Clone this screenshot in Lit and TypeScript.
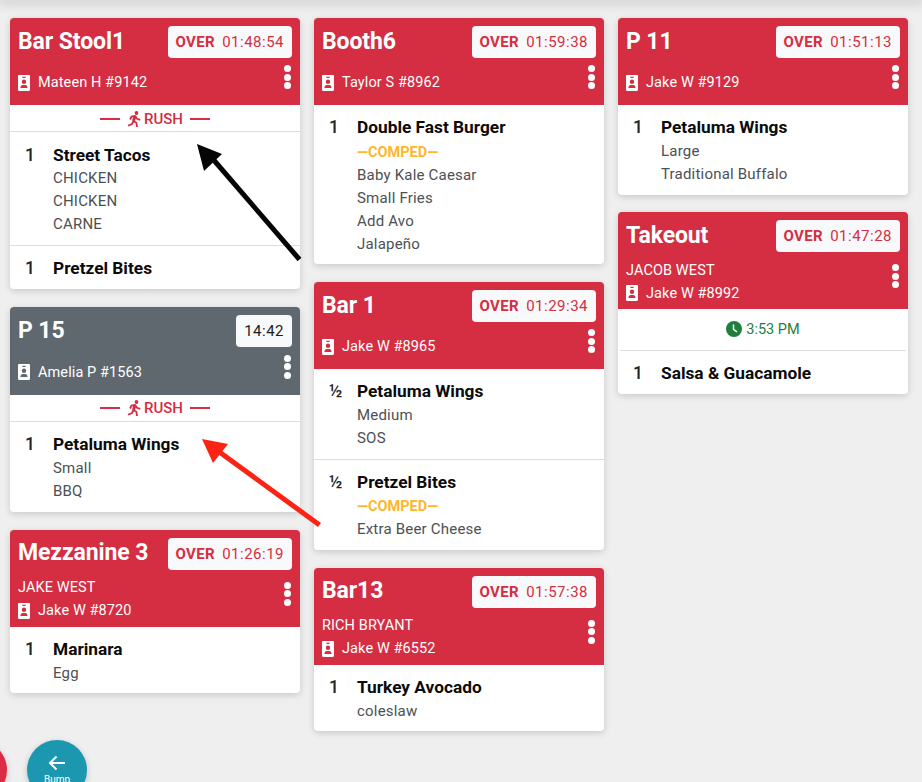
import { LitElement, css, html, nothing, svg } from "lit";
import { customElement, property } from "lit/decorators.js";

type Item = { qty: string; name: string; mods?: string[]; comped?: boolean };
type Ticket = {
  title: string;
  timer: string;
  over?: boolean;
  guest?: string;
  server: string;
  rush?: boolean;
  time?: string;
  items: Item[];
};

const columns: Ticket[][] = [
  [
    {
      title: "Bar Stool1",
      timer: "01:48:54",
      over: true,
      server: "Mateen H #9142",
      rush: true,
      items: [
        { qty: "1", name: "Street Tacos", mods: ["CHICKEN", "CHICKEN", "CARNE"] },
        { qty: "1", name: "Pretzel Bites" },
      ],
    },
    {
      title: "P 15",
      timer: "14:42",
      server: "Amelia P #1563",
      rush: true,
      items: [{ qty: "1", name: "Petaluma Wings", mods: ["Small", "BBQ"] }],
    },
    {
      title: "Mezzanine 3",
      timer: "01:26:19",
      over: true,
      guest: "JAKE WEST",
      server: "Jake W #8720",
      items: [{ qty: "1", name: "Marinara", mods: ["Egg"] }],
    },
  ],
  [
    {
      title: "Booth6",
      timer: "01:59:38",
      over: true,
      server: "Taylor S #8962",
      items: [
        {
          qty: "1",
          name: "Double Fast Burger",
          comped: true,
          mods: ["Baby Kale Caesar", "Small Fries", "Add Avo", "Jalapeño"],
        },
      ],
    },
    {
      title: "Bar 1",
      timer: "01:29:34",
      over: true,
      server: "Jake W #8965",
      items: [
        { qty: "½", name: "Petaluma Wings", mods: ["Medium", "SOS"] },
        { qty: "½", name: "Pretzel Bites", comped: true, mods: ["Extra Beer Cheese"] },
      ],
    },
    {
      title: "Bar13",
      timer: "01:57:38",
      over: true,
      guest: "RICH BRYANT",
      server: "Jake W #6552",
      items: [{ qty: "1", name: "Turkey Avocado", mods: ["coleslaw"] }],
    },
  ],
  [
    {
      title: "P 11",
      timer: "01:51:13",
      over: true,
      server: "Jake W #9129",
      items: [{ qty: "1", name: "Petaluma Wings", mods: ["Large", "Traditional Buffalo"] }],
    },
    {
      title: "Takeout",
      timer: "01:47:28",
      over: true,
      guest: "JACOB WEST",
      server: "Jake W #8992",
      time: "3:53 PM",
      items: [{ qty: "1", name: "Salsa & Guacamole" }],
    },
  ],
];

const badgeIcon = svg`<svg class="badge" viewBox="0 0 12 16" aria-hidden="true">
  <path fill-rule="evenodd" fill="currentColor" d="M1.200 0h9.600C11.500 0 12 .5 12 1.200v13.600c0 .7-.5 1.200-1.200 1.200H1.200C.5 16 0 15.500 0 14.800V1.200C0 .5.500 0 1.200 0ZM4.400 1.800v1.100h3.200V1.800ZM6 4.600a2.200 2.200 0 1 0 0 4.400A2.200 2.200 0 0 0 6 4.600ZM2.400 13h7.200c0-1.800-1.100-3-2.500-3H4.900c-1.400 0-2.500 1.200-2.500 3Z"/>
</svg>`;

const runIcon = svg`<svg class="run" viewBox="0 0 14 16" aria-hidden="true">
  <circle cx="9.500" cy="2" r="1.900" fill="currentColor"/>
  <path d="M8 5 6.500 10" fill="none" stroke="currentColor" stroke-width="3"/>
  <path d="M3 8.500 4.500 5.500 8 5 10 7.800 13.300 8.800M6.500 10 9.500 12 10 16M6.500 10 5 13 1 14.800" fill="none" stroke="currentColor" stroke-width="1.800"/>
</svg>`;

const clockIcon = svg`<svg class="clock" viewBox="0 0 16 16" aria-hidden="true">
  <circle cx="8" cy="8" r="8" fill="currentColor"/>
  <path d="M7.500 3.400V8.400L11 10.800" fill="none" stroke="#fff" stroke-width="1.500"/>
</svg>`;

@customElement("ticket-card")
export class TicketCard extends LitElement {
  static override styles = css`
    :host {
      display: block;
    }
    .card {
      background: #fff;
      border-radius: 4px;
      box-shadow: 0 2px 7px rgba(0, 0, 0, 0.16);
      overflow: hidden;
    }
    .head {
      background: #d52d41;
      color: #fff;
      padding: 8px 8px 0;
    }
    .head.idle {
      background: #60686f;
    }
    .top {
      display: flex;
      justify-content: space-between;
      align-items: flex-start;
    }
    .title {
      font-size: 23px;
      font-weight: 700;
      line-height: 30px;
      padding-top: 0.5px;
      letter-spacing: -0.1px;
    }
    .timer {
      background: #f8f9fa;
      border-radius: 4px;
      height: 32px;
      box-sizing: border-box;
      padding: 0 8px;
      display: flex;
      align-items: center;
      gap: 7px;
      font-size: 15px;
      color: #d52d41;
      letter-spacing: 0.5px;
    }
    .timer b {
      font-weight: 700;
      letter-spacing: 0.4px;
    }
    .idle .timer {
      color: #1a1c1e;
    }
    .who {
      display: flex;
      align-items: center;
      min-height: 47px;
      box-sizing: border-box;
      padding: 5.5px 0;
    }
    .idle .who {
      min-height: 47.5px;
    }
    .names {
      flex: 1;
      font-size: 14.500px;
      line-height: 23px;
      letter-spacing: 0.1px;
      padding-top: 1px;
      margin-bottom: -1px;
    }
    .server {
      display: flex;
      align-items: center;
      gap: 8px;
    }
    .badge {
      width: 12px;
      height: 16px;
    }
    .dots {
      display: flex;
      flex-direction: column;
      gap: 1.5px;
      margin: 0 1px 9px 0;
    }
    .dots i {
      width: 7px;
      height: 7px;
      border-radius: 50%;
      background: #fff;
    }
    .rush {
      height: 27.25px;
      box-sizing: border-box;
      padding-top: 1px;
      border-bottom: 1px solid #dcdcdc;
      color: #d52d41;
      display: flex;
      align-items: center;
      justify-content: center;
      gap: 3px;
      font-size: 15px;
      font-weight: 500;
    }
    .rush .bar {
      width: 20px;
      height: 2px;
      background: #d52d41;
    }
    .rush .bar:first-child {
      margin-right: 4px;
    }
    .rush .bar:last-child {
      margin-left: 4px;
    }
    .run {
      width: 14px;
      height: 16px;
    }
    .time {
      height: 41.5px;
      box-sizing: border-box;
      padding-bottom: 1px;
      color: #1f7f3c;
      display: flex;
      align-items: center;
      justify-content: center;
      gap: 4px;
      font-size: 14.500px;
      position: relative;
    }
    .time::after {
      content: "";
      position: absolute;
      left: 2px;
      right: 2px;
      bottom: 0;
      border-bottom: 1px solid #dcdcdc;
    }
    .clock {
      width: 16px;
      height: 16px;
    }
    .item {
      display: flex;
      padding: 10px 8px 9px 0;
    }
    .item + .item {
      border-top: 1px solid #dcdcdc;
    }
    .qty {
      width: 43px;
      box-sizing: border-box;
      padding-left: 15px;
      font-size: 17.500px;
      font-weight: 500;
      line-height: 24.500px;
      padding-top: 0.25px;
      margin-bottom: -0.25px;
      color: #212529;
    }
    .name {
      font-size: 17.300px;
      font-weight: 700;
      line-height: 24.500px;
      padding-top: 0.25px;
      margin-bottom: -0.25px;
      color: #0b0b0b;
    }
    .mod {
      font-size: 15px;
      line-height: 23px;
      color: #4d5054;
      letter-spacing: 0.2px;
      padding-top: 0.5px;
      margin-bottom: -0.5px;
    }
    .comped {
      font-size: 14.500px;
      font-weight: 700;
      line-height: 25px;
      margin-bottom: -1.5px;
      color: #fdb72b;
    }
  `;

  @property({ attribute: false }) ticket!: Ticket;

  override render() {
    const t = this.ticket;
    return html`<div class="card">
      <div class="head ${t.over ? "" : "idle"}">
        <div class="top">
          <div class="title">${t.title}</div>
          <div class="timer">${t.over ? html`<b>OVER</b>` : nothing}<span>${t.timer}</span></div>
        </div>
        <div class="who">
          <div class="names">
            ${t.guest ? html`<div>${t.guest}</div>` : nothing}
            <div class="server">${badgeIcon}<span>${t.server}</span></div>
          </div>
          <div class="dots"><i></i><i></i><i></i></div>
        </div>
      </div>
      ${t.rush
        ? html`<div class="rush"><span class="bar"></span>${runIcon}<span>RUSH</span><span class="bar"></span></div>`
        : nothing}
      ${t.time ? html`<div class="time">${clockIcon}<span>${t.time}</span></div>` : nothing}
      ${t.items.map(
        (item) => html`<div class="item">
          <div class="qty">${item.qty}</div>
          <div>
            <div class="name">${item.name}</div>
            ${item.comped ? html`<div class="comped">—COMPED—</div>` : nothing}
            ${(item.mods ?? []).map((m) => html`<div class="mod">${m}</div>`)}
          </div>
        </div>`
      )}
    </div>`;
  }
}

@customElement("app-root")
export class AppRoot extends LitElement {
  static override styles = css`
    :host {
      display: block;
      position: relative;
      height: 782px;
      overflow: hidden;
      background: #efefef;
      font-family: Roboto, "Liberation Sans", sans-serif;
    }
    .shade {
      height: 0;
      box-shadow: 0 0 12px 3px rgba(0, 0, 0, 0.2);
    }
    .board {
      display: flex;
      gap: 14px;
      padding: 18px 10px 0;
    }
    .col {
      width: 290px;
      display: flex;
      flex-direction: column;
      gap: 18px;
    }
    .col:last-child {
      gap: 17.5px;
    }
    .fab {
      position: absolute;
      top: 740px;
      width: 60px;
      height: 60px;
      border-radius: 50%;
      box-shadow: 0 2px 6px rgba(0, 0, 0, 0.2);
      color: #fff;
      display: flex;
      flex-direction: column;
      align-items: center;
      padding-top: 15px;
      box-sizing: border-box;
      font-size: 10px;
    }
    .fab.bump {
      left: 27px;
      background: #1b98b0;
    }
    .fab.other {
      left: -53px;
      background: #dc2c45;
    }
    .fab svg {
      width: 18px;
      height: 16px;
      margin-bottom: 3px;
    }
    .arrows {
      position: absolute;
      inset: 0;
      pointer-events: none;
    }
  `;

  override render() {
    return html`<div class="shade"></div>
      <div class="board">
        ${columns.map(
          (col) => html`<div class="col">
            ${col.map((t) => html`<ticket-card .ticket=${t}></ticket-card>`)}
          </div>`
        )}
      </div>
      <div class="fab other"></div>
      <div class="fab bump">
        <svg viewBox="0 0 18 16" aria-hidden="true">
          <path d="M17 8H2M8.500 1.500 2 8l6.500 6.500" fill="none" stroke="#fff" stroke-width="2"/>
        </svg>
        <span>Bump</span>
      </div>
      <svg class="arrows" viewBox="0 0 922 782" aria-hidden="true">
        <path d="M299.500 259.500 212 158" stroke="#050505" stroke-width="5" fill="none"/>
        <path d="M197 144 222 154 204 171Z" fill="#050505"/>
        <path d="M319.500 525 218 451" stroke="#fb2314" stroke-width="5" fill="none"/>
        <path d="M202 439 228 444 213 463Z" fill="#fb2314"/>
      </svg>`;
  }
}
